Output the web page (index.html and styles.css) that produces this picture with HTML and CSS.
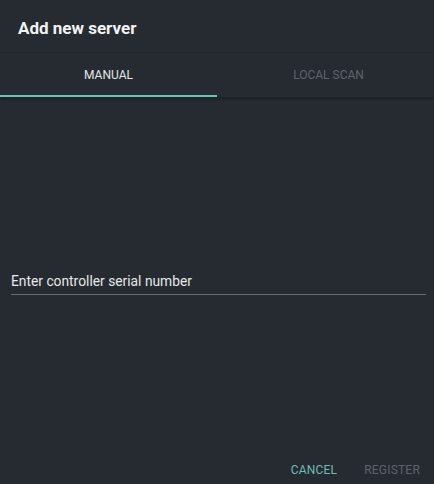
FILE: index.html
```html
<!DOCTYPE html>
<html lang="en">
<head>
	<meta charset="UTF-8">
	<title>Add new server</title>
	<link rel="stylesheet" href="styles.css">
</head>
<body>
	<div class="dialog">
		<div class="dialog-title">Add new server</div>
		<div class="tabs">
			<div class="tab active">MANUAL</div>
			<div class="tab">LOCAL SCAN</div>
		</div>
		<div class="content">
			<div class="field">
				<div class="field-label">Enter controller serial number</div>
			</div>
		</div>
		<div class="actions">
			<button class="btn primary">CANCEL</button>
			<button class="btn disabled">REGISTER</button>
		</div>
	</div>
</body>
</html>
```

FILE: styles.css
```css
html,body{
	margin: 0;
	padding: 0;
	background: #252b31;
}
body{
	font-family: Roboto, "Liberation Sans", sans-serif;
	color: #e6e8e9;
}
.dialog{
	width: 434px;
	height: 484px;
	display: flex;
	flex-direction: column;
	background: #252b31;
}
.dialog-title{
	height: 53px;
	box-sizing: border-box;
	padding: 18px 18px 0;
	font-size: 17px;
	font-weight: 700;
	color: #f2f3f3;
	border-bottom: 1px solid #22282d;
}
.tabs{
	display: flex;
	height: 44px;
	box-shadow: 0 2px 3px rgba(0,0,0,0.25);
	position: relative;
}
.tab{
	flex: none;
	width: 50%;
	display: flex;
	align-items: center;
	justify-content: center;
	font-size: 12px;
	color: #5d6469;
	box-sizing: border-box;
	padding-top: 2px;
	border-bottom: 2px solid transparent;
}
.tab.active{
	color: #e3e5e6;
	border-bottom-color: #6cc3b8;
}
.tab + .tab{
	padding-left: 6px;
}
.content{
	flex: 1;
	display: flex;
	flex-direction: column;
	padding: 175px 8px 0 11px;
}
.field{
	border-bottom: 1px solid #656b6f;
	padding-bottom: 4px;
}
.field-label{
	font-size: 13.8px;
	color: #e6e8e9;
	line-height: 18px;
}
.actions{
	display: flex;
	justify-content: flex-end;
	gap: 15px;
	padding: 0 8px 0 0;
}
.btn{
	background: none;
	border: none;
	font-family: inherit;
	font-size: 12px;
	padding: 2px 6px 0;
	height: 30px;
	letter-spacing: 0.2px;
}
.btn.primary{
	color: #6fbcb2;
}
.btn.disabled{
	color: #5d6469;
}
```
